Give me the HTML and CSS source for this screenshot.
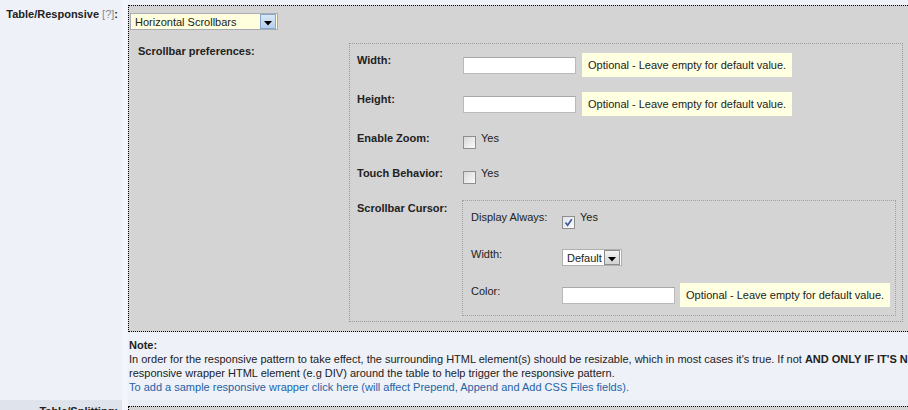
FILE: index.html
```html
<!DOCTYPE html>
<html>
<head>
<meta charset="utf-8">
<link rel="stylesheet" href="styles.css">
</head>
<body>
<div class="page">
  <div class="row row-main">
    <div class="label">Table/Responsive <span class="help">[?]</span>:</div>
    <div class="sep"></div>
    <div class="value">
      <div class="box">
        <div class="select yellow">
          <span class="sel-text">Horizontal Scrollbars</span>
          <span class="sel-btn blue"><svg width="8" height="5" viewBox="0 0 8 5"><polygon points="0,0 8,0 4,4.5" fill="#000"/></svg></span>
        </div>
        <div class="prefs">
          <div class="prefs-label">Scrollbar preferences:</div>
          <div class="inner">
            <div class="field">
              <div class="f-label">Width:</div>
              <div class="f-val"><span class="input"></span><span class="hint">Optional - Leave empty for default value.</span></div>
            </div>
            <div class="field">
              <div class="f-label">Height:</div>
              <div class="f-val"><span class="input"></span><span class="hint">Optional - Leave empty for default value.</span></div>
            </div>
            <div class="field cb">
              <div class="f-label">Enable Zoom:</div>
              <div class="f-val"><span class="check"></span><span class="yes">Yes</span></div>
            </div>
            <div class="field cb tight">
              <div class="f-label">Touch Behavior:</div>
              <div class="f-val"><span class="check"></span><span class="yes">Yes</span></div>
            </div>
            <div class="field last">
              <div class="f-label pad1">Scrollbar Cursor:</div>
              <div class="cbox">
                <div class="cfield cb">
                  <div class="c-label">Display Always:</div>
                  <div class="f-val"><span class="check checked low"><svg width="11" height="11" viewBox="0 0 11 11"><path d="M2.5 5.5 L4.6 8.2 L8.8 2.2" fill="none" stroke="#3f5d9e" stroke-width="1.7"/></svg></span><span class="yes">Yes</span></div>
                </div>
                <div class="cfield sel-row">
                  <div class="c-label">Width:</div>
                  <div class="f-val">
                    <div class="select small">
                      <span class="sel-text">Default</span>
                      <span class="sel-btn gray"><svg width="8" height="5" viewBox="0 0 8 5"><polygon points="0,0 8,0 4,4.5" fill="#000"/></svg></span>
                    </div>
                  </div>
                </div>
                <div class="cfield last">
                  <div class="c-label pad1">Color:</div>
                  <div class="f-val"><span class="input"></span><span class="hint hint-c">Optional - Leave empty for default value.</span></div>
                </div>
              </div>
            </div>
          </div>
        </div>
      </div>
      <div class="note">
        <div class="note-title">Note:</div>
        <div class="note-line">In order for the responsive pattern to take effect, the surrounding HTML element(s) should be resizable, which in most cases it's true. If not <b>AND ONLY IF IT'S NECESSARY</b> you can add a</div>
        <div class="note-line">responsive wrapper HTML element (e.g DIV) around the table to help trigger the responsive pattern.</div>
        <div class="note-line"><a class="note-link" href="#">To add a sample responsive wrapper click here (will affect Prepend, Append and Add CSS Files fields).</a></div>
      </div>
    </div>
  </div>
  <div class="row row-next">
    <div class="label label-next">Table/Splitting:</div>
    <div class="sep"></div>
    <div class="value value-next">
      <div class="box box-next"></div>
    </div>
  </div>
</div>
</body>
</html>
```

FILE: styles.css
```css
html, body {
  margin: 0;
  padding: 0;
  overflow: hidden;
}
body {
  font-family: "Liberation Sans", Arial, sans-serif;
  font-size: 11px;
  color: #222;
  background: #eef1f8;
}
.page {
  width: 1200px;
}
.row {
  display: flex;
}
.row-main {
  background: #eef1f8;
}
.label {
  width: 122px;
  flex: none;
  box-sizing: border-box;
  padding: 7px 4px 0 0;
  text-align: right;
  font-weight: bold;
  line-height: 14px;
}
.help {
  font-weight: normal;
  color: #8a8a8a;
}
.sep {
  width: 6px;
  flex: none;
  background: #f3f5fa;
}
.value {
  flex: 1;
  padding: 5px 0 6px 0;
}
.box {
  border: 1px dotted #000;
  background: #d4d4d4;
  padding: 7px 1px 9px;
}
.select {
  display: flex;
  align-items: center;
  box-sizing: border-box;
  height: 17px;
  border: 1px solid #a9adb3;
}
.select.yellow {
  width: 148px;
  background: #ffffdd;
}
.select.small {
  width: 60px;
  background: #fff;
  border-color: #b0b0b0;
}
.sel-text {
  flex: 1;
  padding-left: 4px;
  line-height: 14px;
  white-space: nowrap;
}
.sel-btn {
  display: flex;
  align-items: center;
  justify-content: center;
  box-sizing: border-box;
  width: 16px;
  height: 15px;
  margin-right: 1px;
  padding-top: 3px;
}
.sel-btn.blue {
  background: linear-gradient(#d9e7f6, #b6cfeb);
  border: 1px solid #86a7cf;
}
.sel-btn.gray {
  background: linear-gradient(#f4f4f4, #d2d2d2);
  border: 1px solid #8c8c8c;
}
.prefs {
  display: flex;
  margin-top: 13px;
}
.prefs-label {
  width: 211px;
  padding-left: 8px;
  padding-top: 1px;
  font-weight: bold;
  line-height: 14px;
}
.inner {
  width: 554px;
  box-sizing: border-box;
  border: 1px dotted #9a9a9a;
  padding: 9px 0 5px 7px;
}
.field {
  display: flex;
  align-items: flex-start;
  margin-bottom: 15px;
}
.field.cb {
  height: 20px;
}
.field.tight {
  margin-bottom: 14px;
}
.field.last,
.cfield.last {
  margin-bottom: 0;
}
.f-label {
  width: 106px;
  flex: none;
  font-weight: bold;
  line-height: 14px;
}
.pad1 {
  padding-top: 1px;
}
.f-val {
  display: flex;
  align-items: flex-start;
}
.input {
  display: block;
  width: 113px;
  height: 17px;
  box-sizing: border-box;
  border: 1px solid #bababa;
  border-top-color: #a8a8a8;
  background: #fff;
  margin-top: 4px;
}
.hint {
  display: block;
  background: #ffffe1;
  padding: 5px 6px;
  line-height: 14px;
  margin-left: 6px;
  white-space: nowrap;
}
.hint-c {
  margin-left: 5px;
}
.check {
  display: flex;
  align-items: center;
  justify-content: center;
  width: 13px;
  height: 13px;
  box-sizing: border-box;
  border: 1px solid #8e8f8f;
  background: linear-gradient(135deg, #d8d8d8, #fbfbfb);
  margin-top: 5px;
}
.check.low {
  margin-top: 6px;
}
.check.checked {
  background: linear-gradient(135deg, #dfe3ea, #fbfbfd);
}
.yes {
  line-height: 14px;
  margin-left: 5px;
}
.cbox {
  width: 434px;
  box-sizing: border-box;
  margin-left: -1px;
  border: 1px dotted #a0a0a0;
  padding: 9px 0 8px 8px;
}
.cfield {
  display: flex;
  align-items: flex-start;
  margin-bottom: 17px;
}
.cfield.cb {
  height: 20px;
}
.cfield.sel-row {
  height: 19px;
}
.cfield.sel-row .select {
  margin-top: 2px;
}
.c-label {
  width: 91px;
  flex: none;
  line-height: 14px;
}
.note {
  margin-top: 6px;
  padding-left: 1px;
  line-height: 14px;
  white-space: nowrap;
}
.note-title {
  font-weight: bold;
}
.note-link {
  color: #1f63a6;
  text-decoration: none;
}
.row-next {
  background: #e9ecf3;
}
.label-next {
  background: #dfe3ec;
  padding-top: 4px;
}
.value-next {
  padding-top: 6px;
}
.box-next {
  height: 40px;
}
```
